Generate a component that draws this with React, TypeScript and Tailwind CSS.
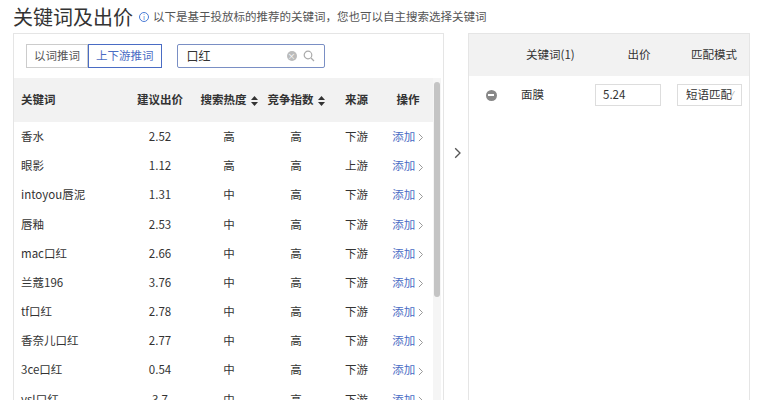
import React from "react";

const rows: [string, string, string, string, string][] = [
  ["香水", "2.52", "高", "高", "下游"],
  ["眼影", "1.12", "高", "高", "上游"],
  ["intoyou唇泥", "1.31", "中", "高", "下游"],
  ["唇釉", "2.53", "中", "高", "下游"],
  ["mac口红", "2.66", "中", "高", "下游"],
  ["兰蔻196", "3.76", "中", "高", "下游"],
  ["tf口红", "2.78", "中", "高", "下游"],
  ["香奈儿口红", "2.77", "中", "高", "下游"],
  ["3ce口红", "0.54", "中", "高", "下游"],
  ["ysl口红", "3.7", "中", "高", "下游"],
];

const Sort = () => (
  <svg width="7" height="10" viewBox="0 0 7 10" className="ml-1 inline-block">
    <path d="M3.5 0L7 4H0z M3.5 10L0 6h7z" fill="#333" />
  </svg>
);

const Chev = ({ c = "#999", s = 9 }: { c?: string; s?: number }) => (
  <svg width={s * 0.6} height={s} viewBox="0 0 6 10" className="inline-block ml-[3px]">
    <path d="M1 1l4 4-4 4" fill="none" stroke={c} strokeWidth="1.1" />
  </svg>
);

export default function App() {
  return (
    <div className="w-[765px] h-[400px] overflow-hidden bg-white relative text-[#333]" style={{ fontFamily: '"Noto Sans CJK SC", "Noto Sans", sans-serif' }}>
      <div className="flex items-center h-[33px] pl-[13px]">
        <span className="text-[20px] leading-none">关键词及出价</span>
        <span className="ml-[6px] w-[10px] h-[10px] rounded-full border border-[#4a7bd6] text-[#4a7bd6] text-[7px] leading-[8px] text-center">i</span>
        <span className="ml-[4px] text-[11.5px] text-[#555]">以下是基于投放标的推荐的关键词，您也可以自主搜索选择关键词</span>
      </div>
      <div className="flex">
        <div className="ml-[13px] w-[431px] h-[380px] border border-[#e5e5e5] relative">
          <div className="flex items-center h-[44px] pl-[12px]">
            <div className="flex h-[24px] text-[11.5px]">
              <div className="px-[7px] border border-[#ccc] flex items-center text-[#555]">以词推词</div>
              <div className="px-[7px] border border-[#4a6cc4] flex items-center text-[#4a6cc4]">上下游推词</div>
            </div>
            <div className="ml-[15px] w-[148px] h-[24px] border border-[#7a8fc4] rounded-[2px] flex items-center px-[9px] text-[12px]">
              <span>口红</span>
              <span className="ml-auto w-[10px] h-[10px] rounded-full bg-[#bbb] text-white text-[8px] leading-[10px] text-center">×</span>
              <svg width="12" height="12" viewBox="0 0 12 12" className="ml-[6px]"><circle cx="5" cy="5" r="3.8" fill="none" stroke="#aaa" strokeWidth="1.2" /><path d="M8 8l3 3" stroke="#aaa" strokeWidth="1.2" /></svg>
            </div>
          </div>
          <div className="mr-[10px]">
            <div className="flex items-center h-[44px] bg-[#f2f2f2] text-[11.5px] font-bold text-[#333]">
              <div className="w-[110px] pl-[7px]">关键词</div>
              <div className="w-[72px] text-center">建议出价</div>
              <div className="w-[66px] text-center">搜索热度<Sort /></div>
              <div className="w-[68px] text-center">竞争指数<Sort /></div>
              <div className="w-[53px] text-center">来源</div>
              <div className="w-[50px] text-center">操作</div>
            </div>
            {rows.map((r) => (
              <div key={r[0]} className="flex items-center h-[29.2px] text-[11.5px] text-[#333]">
                <div className="w-[110px] pl-[7px]">{r[0]}</div>
                <div className="w-[72px] text-center">{r[1]}</div>
                <div className="w-[66px] text-center">{r[2]}</div>
                <div className="w-[68px] text-center">{r[3]}</div>
                <div className="w-[53px] text-center">{r[4]}</div>
                <div className="w-[50px] text-center text-[#4a6cc4]">添加<Chev /></div>
              </div>
            ))}
          </div>
          <div className="absolute right-[2px] top-[44px] w-[8px] h-[340px] bg-[#f5f5f5]">
            <div className="mt-[4px] mx-auto w-[6px] h-[215px] rounded bg-[#c4c4c4]" />
          </div>
        </div>
        <div className="w-[24px] flex items-center justify-center pb-[140px]"><Chev c="#555" s={12} /></div>
        <div className="w-[282px] h-[380px] border border-[#e5e5e5]">
          <div className="flex items-center h-[42px] bg-[#f2f2f2] text-[11.5px]">
            <div className="w-[40px]" />
            <div className="w-[90px] pl-[17px]">关键词(1)</div>
            <div className="w-[80px] text-center">出价</div>
            <div className="w-[70px] text-center">匹配模式</div>
          </div>
          <div className="flex items-center h-[38px] text-[11.5px]">
            <div className="w-[40px] flex justify-center pl-[4px]"><span className="w-[11px] h-[11px] rounded-full bg-[#888] flex items-center justify-center"><span className="w-[6px] h-[2px] bg-white" /></span></div>
            <div className="w-[86px] pl-[12px]">面膜</div>
            <div className="w-[66px] h-[22px] border border-[#ddd] flex items-center pl-[7px]">5.24</div>
            <div className="ml-[16px] w-[65px] h-[22px] border border-[#ddd] flex items-center pl-[8px] whitespace-nowrap overflow-hidden">短语匹配<span className="text-[#aaa] text-[9px]">⁄</span></div>
          </div>
        </div>
      </div>
    </div>
  );
}
